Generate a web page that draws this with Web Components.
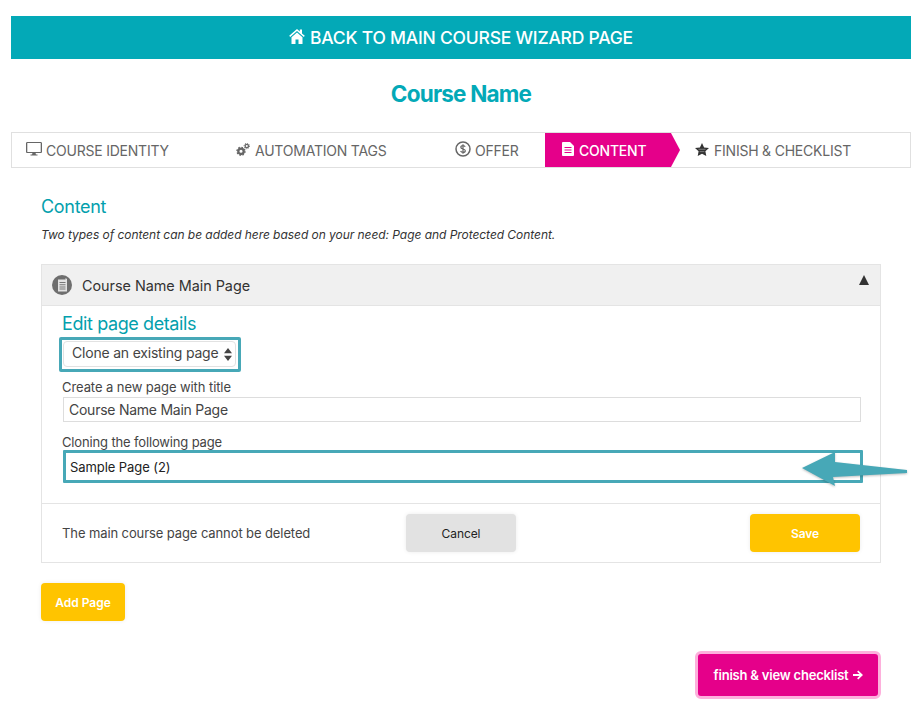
<!DOCTYPE html>
<html>
<head>
<meta charset="utf-8">
<title>Course wizard</title>
<style>
html, body { margin: 0; background: #fff; }
body { font-family: Inter, "Liberation Sans", sans-serif; color: #333; }
</style>
</head>
<body>
<wizard-page></wizard-page>
<script>
const ICONS = {
  home: `<svg width="16" height="16" viewBox="0 0 16 16"><path fill="currentColor" d="M8 1 .2 7.800l1 1.100L8 3 14.800 8.900l1-1.100-2.800-2.400V1.500h-2.200v2zM8 4.500 2.500 9.200V16h4v-4.500h3V16h4V9.200z"/></svg>`,
  desktop: `<svg width="16" height="14" viewBox="0 0 16 14"><path fill="currentColor" d="M1.300 0h13.400C15.400 0 16 .6 16 1.300v8.400c0 .7-.6 1.300-1.300 1.300H9.600l.3 1.600h1.600v1H4.500v-1h1.600l.3-1.600H1.300C.6 11 0 10.400 0 9.700V1.300C0 .6.600 0 1.300 0zm0 1v9h13.400V1z"/></svg>`,
  cogs: `<svg width="14" height="13" viewBox="0 0 14 13"><g fill="none" stroke="currentColor"><circle cx="5" cy="8.300" r="2.700" stroke-width="2.300"/><circle cx="5" cy="8.300" r="4" stroke-width="1.400" stroke-dasharray="1.500 1.640"/><circle cx="10.800" cy="3" r="1.700" stroke-width="1.300"/><circle cx="10.800" cy="3" r="2.700" stroke-width="1" stroke-dasharray="1 1.120"/></g></svg>`,
  dollar: `<svg width="16" height="16" viewBox="0 0 16 16"><circle cx="8" cy="8" r="7" fill="none" stroke="currentColor" stroke-width="1.500"/><path fill="none" stroke="currentColor" stroke-width="1.200" d="M10.200 5.800C9.800 4.900 9 4.600 8 4.600c-1.300 0-2.200.6-2.200 1.700 0 2.300 4.500 1.100 4.500 3.400 0 1.100-1 1.700-2.300 1.700-1.100 0-2-.5-2.400-1.400M8 3.200v9.600"/></svg>`,
  page: `<svg width="12" height="14" viewBox="0 0 12 14"><path fill="currentColor" d="M1 0h7l4 4v9c0 .5-.5 1-1 1H1c-.5 0-1-.5-1-1V1c0-.5.500-1 1-1zm1.500 5v1h7V5zm0 2.500v1h7v-1zm0 2.500v1h7v-1z"/></svg>`,
  sheet: `<svg width="10" height="14" viewBox="0 0 10 14"><path fill="#e2e2e2" d="M1 1.500h7.500V0L10 1v12.500H1z"/><path fill="#777" d="M2.500 4h6v1h-6zm0 2.200h6v1h-6zm0 2.200h6v1h-6zm0 2.200h6v1h-6z"/></svg>`,
  star: `<svg width="14" height="13" viewBox="0 0 14 13"><path fill="#333" d="M7 0l2.100 4.400 4.900.6-3.600 3.300.9 4.700L7 10.700 2.700 13l.9-4.700L0 5l4.900-.6z"/><path fill="none" stroke="#fff" stroke-opacity=".5" stroke-width=".7" d="M3.500 6.300h7M4.600 8.600h4.800"/></svg>`,
  arrow: `<svg width="10" height="10" viewBox="0 0 11 10"><path fill="currentColor" d="M5.800 0 11 5l-5.200 5-1.300-1.300 2.700-2.600H0V3.900h7.200L4.500 1.300z"/></svg>`
};

class WizardBanner extends HTMLElement {
  constructor() {
    super();
    this.attachShadow({ mode: "open" }).innerHTML = `<style>
      :host { display: flex; align-items: center; justify-content: center; gap: 5px; height: 43px; background: #03a9b7; color: #fff; font-size: 17.500px; font-weight: 500; letter-spacing: -.22px; }
      svg { display: block; margin-top: -3px; }
    </style>${ICONS.home}<slot></slot>`;
  }
}

class WizardTab extends HTMLElement {
  constructor() {
    super();
    const icon = ICONS[this.getAttribute("icon")];
    this.attachShadow({ mode: "open" }).innerHTML = `<style>
      :host { display: flex; align-items: center; gap: 5px; height: 34px; box-sizing: border-box; padding-top: 1px; font-size: 14px; letter-spacing: -.22px; color: #666; white-space: nowrap; position: relative; }
      :host([icon="desktop"]), :host([icon="dollar"]) { gap: 4px; }
      :host([active]) { background: #e5008a; color: #fff; font-weight: 500; }
      :host([active])::after { content: ""; position: absolute; left: 100%; top: 0; border-style: solid; border-width: 17px 0 17px 9px; border-color: transparent transparent transparent #e5008a; }
      svg { display: block; margin-top: -3px; }
    </style>${icon}<slot></slot>`;
  }
}

class WizardTabs extends HTMLElement {
  constructor() {
    super();
    this.attachShadow({ mode: "open" }).innerHTML = `<style>
      :host { display: grid; grid-template-columns: 210px 219px 104px 126px 1fr; margin: 0 13px 0 11px; height: 36px; border: 1px solid #e0e0e0; box-sizing: border-box; }
      ::slotted(*) { padding-left: 14px; }
      ::slotted([active]) { padding-left: 17px; }
      ::slotted(:last-child) { padding-left: 24px; }
    </style><slot></slot>`;
  }
}

class PageCard extends HTMLElement {
  constructor() {
    super();
    this.attachShadow({ mode: "open" }).innerHTML = `<style>
      :host { display: block; border: 1px solid #e4e4e4; margin: 0 43px 0 41px; }
      header { display: flex; align-items: center; gap: 10px; height: 40px; padding-left: 10px; background: #f0f0f0; border-bottom: 1px solid #e4e4e4; font-size: 14.400px; letter-spacing: -.03px; color: #333; position: relative; }
      .badge { width: 20px; height: 20px; border-radius: 50%; background: #6e6e6e; display: flex; align-items: center; justify-content: center; }
      .caret { position: absolute; right: 11px; top: 10px; border-style: solid; border-width: 0 5px 10px; border-color: transparent transparent #333; }
      .body { padding: 7px 20px 20px; }
      footer { display: flex; align-items: center; height: 58px; border-top: 1px solid #e4e4e4; padding: 0 20px; font-size: 13px; letter-spacing: -.1px; color: #444; }
    </style>
    <header><span class="badge">${ICONS.sheet}</span><slot name="title"></slot><span class="caret"></span></header>
    <div class="body"><slot></slot></div>
    <footer><slot name="footer"></slot></footer>`;
  }
}

class FormField extends HTMLElement {
  constructor() {
    super();
    this.attachShadow({ mode: "open" }).innerHTML = `<style>
      :host { display: block; font-size: 13px; letter-spacing: -.08px; color: #444; }
      label { display: block; line-height: 16px; margin-bottom: 2px; }
      .box { display: flex; align-items: center; box-sizing: border-box; height: 25px; padding: 0 5px; margin: 0 -1px 0 1px; border: 1px solid #ddd; font-size: 14px; letter-spacing: -.25px; color: #444; }
      :host([highlight]) label { margin-bottom: 0; letter-spacing: -.15px; }
      :host([highlight]) .box { height: 33px; border: 3px solid #47a8b7; margin-right: -3px; font-size: 13px; letter-spacing: -.08px; color: #222; padding: 0 4px; border-radius: 1px; }
    </style><label></label><div class="box"><slot></slot></div>`;
    this.shadowRoot.querySelector("label").textContent = this.getAttribute("label");
  }
}

class CloneSelect extends HTMLElement {
  constructor() {
    super();
    this.attachShadow({ mode: "open" }).innerHTML = `<style>
      :host { display: flex; box-sizing: border-box; height: 35px; width: 182px; margin-left: -3px; padding: 1px 2px 2px 1px; border: 3px solid #47a8b7; border-radius: 2px; }
      div { flex: 1; display: flex; align-items: center; justify-content: space-between; padding: 0 3px 3px 8px; border: 1px solid #e2e2e2; border-radius: 4px; font-size: 14px; letter-spacing: -.2px; color: #444; }
      svg { display: block; margin-top: 3px; }
    </style><div><slot></slot><svg width="8" height="13" viewBox="0 0 8 13"><path fill="#444" d="M4 0l4 5.200H0zM4 13 0 7.800h8z"/></svg></div>`;
  }
}

class ActionButton extends HTMLElement {
  constructor() {
    super();
    this.attachShadow({ mode: "open" }).innerHTML = `<style>
      :host { display: flex; align-items: center; justify-content: center; gap: 4px; box-sizing: border-box; border-radius: 4px; font-size: 12px; font-weight: 600; height: 38px; color: #fff; background: #ffc400; box-shadow: 0 0 4px rgba(0,0,0,.08); }
      :host([kind="grey"]) { background: #e2e2e2; color: #222; font-weight: 400; }
      :host([kind="pink"]) { background: #e5008a; border: 3px solid #fdb0dc; border-radius: 6px; height: 48px; font-size: 13px; letter-spacing: -.2px; box-shadow: none; }
    </style><slot></slot><slot name="icon"></slot>`;
  }
}

class WizardPage extends HTMLElement {
  constructor() {
    super();
    this.attachShadow({ mode: "open" }).innerHTML = `<style>
      :host { display: block; padding-top: 16px; height: 714px; box-sizing: border-box; position: relative; overflow: hidden; }
      wizard-banner { margin: 0 13px 0 11px; }
      h1 { margin: 21px 0 0; padding-right: 2px; height: 52px; text-align: center; font-size: 22.500px; line-height: 28px; font-weight: 700; letter-spacing: -.8px; color: #03a9b7; }
      h2 { margin: 27px 0 0 41px; font-size: 18px; font-weight: 400; line-height: 24px; letter-spacing: -.3px; color: #03a0ad; }
      p { margin: 8px 0 0 41px; height: 37px; font-size: 12px; line-height: 16px; font-style: italic; letter-spacing: -.05px; color: #333; }
      h3 { margin: 0 0 2px; font-size: 18px; font-weight: 400; line-height: 22px; letter-spacing: -.4px; color: #03a0ad; }
      form-field { margin-top: 7px; }
      form-field[highlight] { margin-top: 12px; }
      .note { flex: 0 0 344px; }
      .cancel { width: 110px; }
      .save { width: 110px; margin-left: auto; }
      .add { width: 84px; margin: 20px 0 0 41px; }
      .finish { width: 186px; margin: 30px 0 0 695px; }
      .arrow { position: absolute; left: 800px; top: 450px; filter: drop-shadow(0 1px 1px rgba(0,0,0,.25)); }
      .finish span { display: block; line-height: 0; }
    </style>
    <wizard-banner>BACK TO MAIN COURSE WIZARD PAGE</wizard-banner>
    <h1>Course Name</h1>
    <wizard-tabs>
      <wizard-tab icon="desktop">COURSE IDENTITY</wizard-tab>
      <wizard-tab icon="cogs">AUTOMATION TAGS</wizard-tab>
      <wizard-tab icon="dollar">OFFER</wizard-tab>
      <wizard-tab icon="page" active>CONTENT</wizard-tab>
      <wizard-tab icon="star">FINISH &amp; CHECKLIST</wizard-tab>
    </wizard-tabs>
    <h2>Content</h2>
    <p>Two types of content can be added here based on your need: Page and Protected Content.</p>
    <page-card>
      <span slot="title">Course Name Main Page</span>
      <h3>Edit page details</h3>
      <clone-select>Clone an existing page</clone-select>
      <form-field label="Create a new page with title">Course Name Main Page</form-field>
      <form-field label="Cloning the following page" highlight>Sample Page (2)</form-field>
      <span slot="footer" class="note">The main course page cannot be deleted</span>
      <action-button slot="footer" kind="grey" class="cancel">Cancel</action-button>
      <action-button slot="footer" class="save">Save</action-button>
    </page-card>
    <action-button class="add">Add Page</action-button>
    <action-button kind="pink" class="finish">finish &amp; view checklist<span slot="icon">${ICONS.arrow}</span></action-button>
    <svg class="arrow" width="110" height="40" viewBox="0 0 110 40"><path fill="#47a8b7" d="M2 18 35 2v10l72 8v3l-74 4 2 9z"/></svg>`;
  }
}

customElements.define("wizard-banner", WizardBanner);
customElements.define("wizard-tab", WizardTab);
customElements.define("wizard-tabs", WizardTabs);
customElements.define("page-card", PageCard);
customElements.define("form-field", FormField);
customElements.define("clone-select", CloneSelect);
customElements.define("action-button", ActionButton);
customElements.define("wizard-page", WizardPage);
</script>
</body>
</html>
